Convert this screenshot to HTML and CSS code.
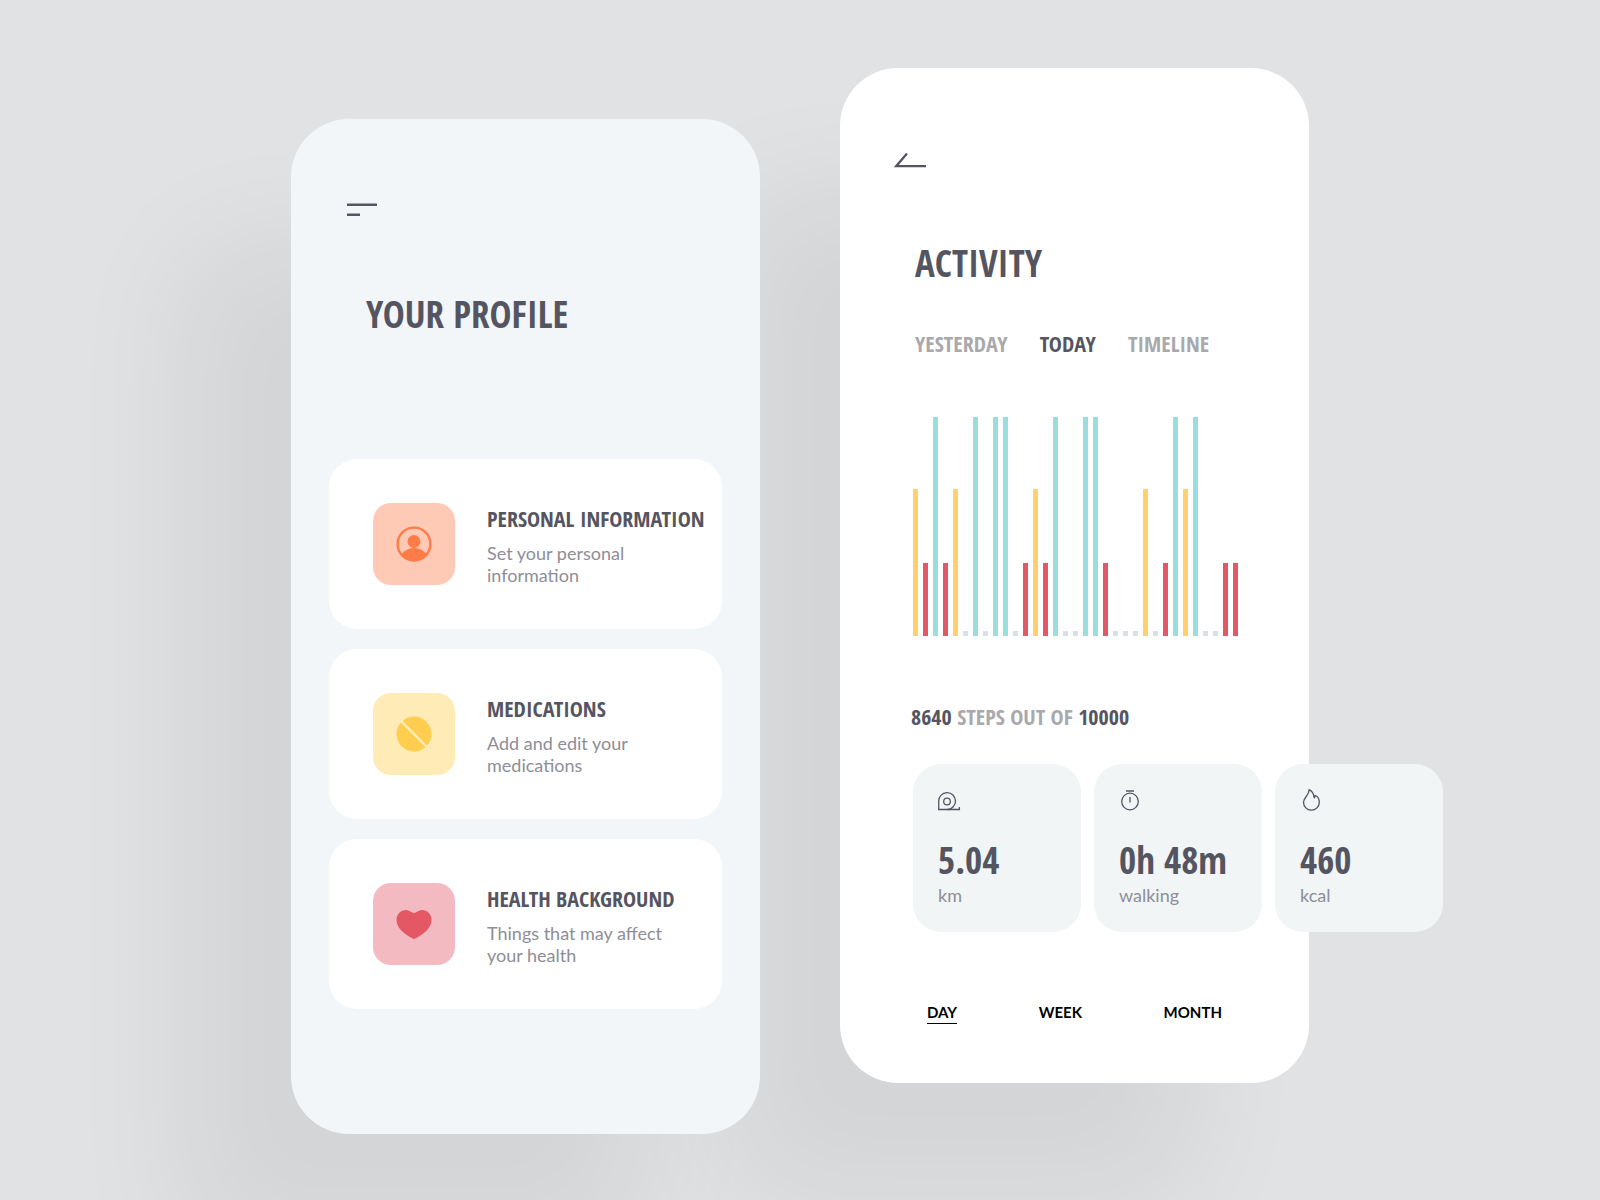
FILE: index.html
```html
<!DOCTYPE html>
<html lang="en">
<head>
<meta charset="utf-8">
<meta name="viewport" content="width=device-width, initial-scale=1">
<title>Health tracker</title>
<link rel="stylesheet" href="styles.css">
</head>
<body>
<main class="stage">
  <section class="phone phone-profile">
    <button class="icon-button menu-button" type="button" aria-label="Menu">
      <svg width="32" height="16" viewBox="0 0 32 16" fill="none" stroke="currentColor" stroke-width="2.6"><path d="M0 1.700H30M0 11.700H13"/></svg>
    </button>
    <h1 class="title">YOUR PROFILE</h1>
    <div class="cards">
      <a class="card" href="#personal">
        <span class="tile tile-orange">
          <svg width="36" height="36" viewBox="0 0 36 36"><circle cx="18" cy="18" r="16.4" fill="none" stroke="currentColor" stroke-width="2.4"/><circle cx="18" cy="15.5" r="6.5" fill="currentColor"/><path d="M5.8 28.2C8.500 24.300 13 22 18 22s9.500 2.300 12.200 6.200A17.500 17.500 0 0 1 18 35.500 17.500 17.500 0 0 1 5.800 28.200Z" fill="currentColor"/></svg>
        </span>
        <span class="card-text"><span class="card-title">PERSONAL INFORMATION</span><span class="card-note">Set your personal<br>information</span></span>
      </a>
      <a class="card" href="#medications">
        <span class="tile tile-yellow">
          <svg width="36" height="36" viewBox="0 0 36 36" fill="currentColor"><path d="M6.560 4.760A17.500 17.500 0 0 1 31.240 29.440ZM4.760 6.560A17.500 17.500 0 0 0 29.440 31.240Z"/></svg>
        </span>
        <span class="card-text"><span class="card-title">MEDICATIONS</span><span class="card-note">Add and edit your<br>medications</span></span>
      </a>
      <a class="card" href="#health">
        <span class="tile tile-red">
          <svg width="36" height="36" viewBox="0 0 36 36" fill="currentColor"><path d="M18 33C11 29.800 .5 23.500 .5 14 .5 8 5 4 10 4c3.600 0 5.500 3 8 3s4.400-3 8-3C31 4 35.500 8 35.500 14 35.500 23.500 25 29.800 18 33Z"/></svg>
        </span>
        <span class="card-text"><span class="card-title">HEALTH BACKGROUND</span><span class="card-note">Things that may affect<br>your health</span></span>
      </a>
    </div>
  </section>

  <section class="phone phone-activity">
    <button class="icon-button back-button" type="button" aria-label="Back">
      <svg width="34" height="16" viewBox="0 0 34 16" fill="none" stroke="currentColor" stroke-width="2.300"><path d="M14 1.500 3.200 14.200H33"/></svg>
    </button>
    <h1 class="title">ACTIVITY</h1>
    <nav class="tabs" aria-label="Day">
      <a href="#yesterday">YESTERDAY</a>
      <a class="current" href="#today">TODAY</a>
      <a href="#timeline">TIMELINE</a>
    </nav>
    <div class="chart" role="img" aria-label="Steps over the day">
      <i class="bar mid"></i><i class="bar low"></i><i class="bar high"></i><i class="bar low"></i><i class="bar mid"></i><i class="bar"></i><i class="bar high"></i><i class="bar"></i><i class="bar high"></i><i class="bar high"></i><i class="bar"></i><i class="bar low"></i><i class="bar mid"></i><i class="bar low"></i><i class="bar high"></i><i class="bar"></i><i class="bar"></i><i class="bar high"></i><i class="bar high"></i><i class="bar low"></i><i class="bar"></i><i class="bar"></i><i class="bar"></i><i class="bar mid"></i><i class="bar"></i><i class="bar low"></i><i class="bar high"></i><i class="bar mid"></i><i class="bar high"></i><i class="bar"></i><i class="bar"></i><i class="bar low"></i><i class="bar low"></i>
    </div>
    <p class="steps"><strong>8640</strong> STEPS OUT OF <strong>10000</strong></p>
    <div class="stats">
      <article class="stat">
        <svg width="24" height="24" viewBox="0 0 24 24" fill="none" stroke="currentColor" stroke-width="1.300"><path d="M21.400 18V20.500H.700V12.500A8.400 8.400 0 1 1 9 20.500"/><path d="M9 20.500h3"/><circle cx="9" cy="12.500" r="3.300"/></svg>
        <strong class="stat-value">5.04</strong><span class="stat-unit">km</span>
      </article>
      <article class="stat">
        <svg width="24" height="24" viewBox="0 0 24 24" fill="none" stroke="currentColor" stroke-width="1.300"><circle cx="11" cy="12.500" r="8.300"/><path d="M11 8V13.500M7 2h8"/></svg>
        <strong class="stat-value">0h 48m</strong><span class="stat-unit">walking</span>
      </article>
      <article class="stat">
        <svg width="24" height="24" viewBox="0 0 24 24" fill="none" stroke="currentColor" stroke-width="1.300" stroke-linejoin="round"><path d="M9 .7C9.500 6 3.500 8.500 3.500 13.300A7.900 7.900 0 0 0 19.300 13.300C19.300 10 18 7.500 15.200 6.500L14.300 9C13.800 5 12 2 9 .7Z"/></svg>
        <strong class="stat-value">460</strong><span class="stat-unit">kcal</span>
      </article>
    </div>
    <nav class="periods" aria-label="Period">
      <a class="current" href="#day">DAY</a>
      <a href="#week">WEEK</a>
      <a href="#month">MONTH</a>
    </nav>
  </section>
</main>
</body>
</html>
```
FILE: styles.css
```css
:root {
  --ink: #555561;
  --muted: #8e8e96;
  --faint: #a9a9ad;
  --condensed: "Open Sans Condensed", "Roboto Condensed", sans-serif;
}

* {
  box-sizing: border-box;
}

body {
  margin: 0;
  background: #e1e2e4;
  color: var(--ink);
  font-family: Lato, sans-serif;
}

a {
  color: inherit;
  text-decoration: none;
}

.stage {
  display: flex;
  justify-content: center;
  align-items: flex-start;
  gap: 80px;
  min-height: 100vh;
  padding: 68px 24px 66px;
  overflow: hidden;
}

.phone {
  position: relative;
  flex: 0 1 469px;
  min-width: 0;
  border-radius: 58px;
  box-shadow: -112px 120px 120px rgb(0 0 0 / 6%);
}

.phone-profile {
  z-index: 1;
  margin-top: 51px;
  padding: 76px 38px 125px;
  background: #f2f6f9;
}

.phone-activity {
  padding: 76px 71px 59px;
  background: #fff;
}

.icon-button {
  display: flex;
  align-items: center;
  height: 32px;
  padding: 0;
  border: 0;
  background: none;
  color: var(--ink);
}

.menu-button {
  margin-left: 18px;
}

.back-button {
  margin-left: -18px;
}

.title {
  margin: 62px 0 0;
  font: 700 37px/50px var(--condensed);
}

.phone-profile .title {
  margin-left: 37px;
}

.phone-activity .title {
  margin-left: 4px;
}

.cards {
  display: flex;
  flex-direction: column;
  gap: 20px;
  margin-top: 120px;
}

.card {
  display: flex;
  align-items: center;
  gap: 32px;
  min-height: 170px;
  padding: 0 12px 0 44px;
  border-radius: 28px;
  background: #fff;
}

.tile {
  display: grid;
  flex: none;
  place-items: center;
  width: 82px;
  height: 82px;
  border-radius: 18px;
}

.tile-orange {
  background: #ffcab5;
  color: #ff7b47;
}

.tile-yellow {
  background: #ffebb5;
  color: #ffce50;
}

.tile-red {
  background: #f4bac1;
  color: #e45765;
}

.card-text {
  display: flex;
  flex-direction: column;
  gap: 8px;
}

.card-title {
  font: 700 22px/32px var(--condensed);
  white-space: nowrap;
}

.card-note {
  color: var(--muted);
  font-size: 18px;
  line-height: 22px;
}

.tabs {
  display: flex;
  gap: 32px;
  margin: 39px 0 0 4px;
  color: var(--faint);
  font: 700 22px/32px var(--condensed);
}

.tabs .current {
  color: var(--ink);
}

.chart {
  display: flex;
  justify-content: space-between;
  align-items: flex-end;
  height: 219px;
  margin: 58px 0 0 2px;
}

.bar {
  width: 5px;
  height: 5px;
  background: #dae1e6;
}

.low {
  height: 73px;
  background: #e45765;
}

.mid {
  height: 147px;
  background: #ffd06b;
}

.high {
  height: 219px;
  background: #9adddd;
}

.steps {
  margin: 64px 0 0;
  color: var(--faint);
  font: 700 22px/32px var(--condensed);
}

.steps strong {
  color: var(--ink);
}

.stats {
  display: flex;
  gap: 13px;
  width: max-content;
  margin: 32px 0 0 2px;
}

.stat {
  display: flex;
  flex-direction: column;
  width: 168px;
  min-height: 168px;
  padding: 25px;
  border-radius: 28px;
  background: #f1f5f6;
}

.stat-value {
  margin-top: 23px;
  font: 700 37px/48px var(--condensed);
}

.stat-unit {
  color: var(--muted);
  font-size: 18px;
  line-height: 22px;
}

.periods {
  display: flex;
  justify-content: space-between;
  margin: 70px 16px 0;
  color: #000;
  font-size: 15px;
  font-weight: 700;
  line-height: 20px;
}

.periods a {
  padding-bottom: 1px;
  border-bottom: 1px solid transparent;
}

.periods .current {
  border-color: #000;
}
```
